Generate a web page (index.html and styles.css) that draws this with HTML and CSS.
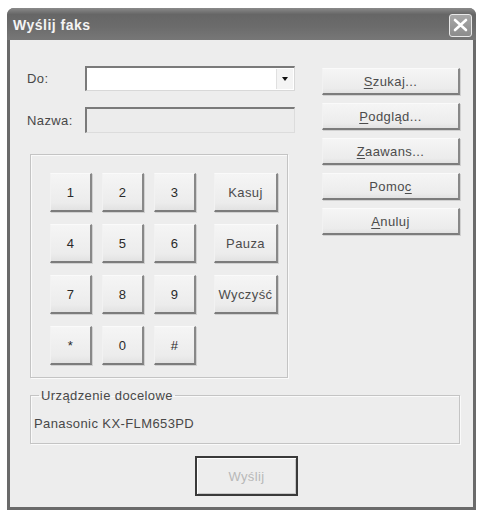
FILE: index.html
```html
<!DOCTYPE html>
<html lang="pl">
<head>
<meta charset="utf-8">
<title>Wyślij faks</title>
<link rel="stylesheet" href="styles.css">
</head>
<body>
<div class="window">
  <div class="titlebar">
    <span class="title">Wyślij faks</span>
    <div class="close"><svg width="15" height="14" viewBox="0 0 15 14"><path d="M2 2 L13 12 M13 2 L2 12" stroke="#fff" stroke-width="2.6" stroke-linecap="round"/></svg></div>
  </div>
  <div class="client">
    <div class="top">
      <div class="left">
        <div class="row">
          <label class="lbl">Do:</label>
          <div class="combo"><div class="combo-btn"><span class="arrow"></span></div></div>
        </div>
        <div class="row row2">
          <label class="lbl">Nazwa:</label>
          <div class="field"></div>
        </div>
        <div class="keypad">
          <button class="btn key">1</button>
          <button class="btn key">2</button>
          <button class="btn key">3</button>
          <button class="btn key wide">Kasuj</button>
          <button class="btn key">4</button>
          <button class="btn key">5</button>
          <button class="btn key">6</button>
          <button class="btn key wide">Pauza</button>
          <button class="btn key">7</button>
          <button class="btn key">8</button>
          <button class="btn key">9</button>
          <button class="btn key wide">Wyczyść</button>
          <button class="btn key">*</button>
          <button class="btn key">0</button>
          <button class="btn key">#</button>
        </div>
      </div>
      <div class="right">
        <button class="btn side"><u>S</u>zukaj...</button>
        <button class="btn side"><u>P</u>odgląd...</button>
        <button class="btn side"><u>Z</u>aawans...</button>
        <button class="btn side">Pomo<u>c</u></button>
        <button class="btn side"><u>A</u>nuluj</button>
      </div>
    </div>
    <fieldset class="device">
      <legend>Urządzenie docelowe</legend>
      <div class="device-name">Panasonic KX-FLM653PD</div>
    </fieldset>
    <div class="footer">
      <button class="btn send" disabled>Wyślij</button>
    </div>
  </div>
</div>
</body>
</html>
```
FILE: styles.css
```css
html, body {
  margin: 0;
  padding: 0;
  background: #ffffff;
}
body {
  font-family: "Liberation Sans", Arial, sans-serif;
  font-size: 13px;
  letter-spacing: 0.4px;
  color: #484848;
}
.window {
  margin: 8px 0 0 7px;
  width: 469px;
  height: 502px;
  background: #6a6a6a;
  border-radius: 7px 7px 0 0;
  display: flex;
  flex-direction: column;
  overflow: hidden;
}
.titlebar {
  height: 32px;
  flex: none;
  background: linear-gradient(#8a8a8a 0%, #666 20%, #6c6c6c 60%, #777 100%);
  display: flex;
  align-items: center;
  justify-content: space-between;
  padding: 0 4px 0 6px;
}
.title {
  font-family: "Liberation Sans", sans-serif;
  font-weight: bold;
  font-size: 14px;
  color: #f4f4f4;
  letter-spacing: 0.5px;
  margin-top: 2px;
}
.close {
  width: 21px;
  height: 21px;
  border: 1.5px solid #e8e8e8;
  border-radius: 3px;
  background: linear-gradient(#a8a8a8, #8c8c8c);
  display: flex;
  align-items: center;
  justify-content: center;
  margin-top: 2px;
}
.client {
  flex: 1;
  margin: 0 3px 3px 3px;
  background: #ededed;
  display: flex;
  flex-direction: column;
}
.top {
  display: flex;
  padding: 26px 0 0 17px;
}
.left {
  width: 268px;
  display: flex;
  flex-direction: column;
}
.row {
  display: flex;
  align-items: center;
  height: 25px;
}
.row2 {
  margin-top: 16px;
  height: 26px;
}
.lbl {
  width: 58px;
}
.combo {
  flex: 1;
  height: 25px;
  box-sizing: border-box;
  background: #fff;
  border-style: solid;
  border-width: 2px 1px 1px 2px;
  border-color: #7a7a7a #d8d8d8 #d8d8d8 #7a7a7a;
  display: flex;
  justify-content: flex-end;
  padding: 1px;
}
.combo-btn {
  width: 16px;
  display: flex;
  align-items: center;
  justify-content: center;
  background: #f4f4f4;
  border-left: 1px solid #e0e0e0;
}
.arrow {
  width: 0;
  height: 0;
  border-left: 3.5px solid transparent;
  border-right: 3.5px solid transparent;
  border-top: 4px solid #111;
}
.field {
  flex: 1;
  height: 26px;
  box-sizing: border-box;
  background: #ececec;
  border-style: solid;
  border-width: 2px 1px 1px 2px;
  border-color: #7a7a7a #dcdcdc #dcdcdc #7a7a7a;
}
.btn {
  font-family: "Liberation Sans", Arial, sans-serif;
  font-size: 13px;
  letter-spacing: 0.4px;
  color: #4c4c4c;
  background: linear-gradient(#f5f5f5, #ececec 80%, #e2e2e2);
  border-style: solid;
  border-width: 1px 2px 2px 1px;
  border-color: #fafafa #888 #7c7c7c #f2f2f2;
  box-shadow: 1px 1px 0 #d0d0d0;
  padding: 0;
  box-sizing: border-box;
  cursor: default;
}
.btn u {
  text-decoration-thickness: 1px;
  text-underline-offset: 2px;
}
.keypad {
  margin: 21px 0 0 3px;
  width: 258px;
  height: 224px;
  box-sizing: border-box;
  border: 1px solid #c4c4c4;
  box-shadow: inset 1px 1px 0 #fafafa, 1px 1px 0 #fafafa;
  padding: 18px 9px 0 19px;
  display: grid;
  grid-template-columns: 42px 42px 42px 72px;
  grid-auto-rows: 39px;
  column-gap: 10px;
  row-gap: 12px;
  align-content: start;
}
.key {
  width: 42px;
  height: 39px;
  color: #2a2a2a;
}
.key.wide {
  width: 64px;
  justify-self: end;
  color: #4c4c4c;
}
.right {
  margin: 2px 0 0 27px;
  display: flex;
  flex-direction: column;
  gap: 8px;
}
.side {
  width: 138px;
  height: 27px;
}
.device {
  margin: 10px 0 0 20px;
  width: 430px;
  height: 56px;
  box-sizing: border-box;
  border: 1px solid #c4c4c4;
  box-shadow: inset 1px 1px 0 #fafafa, 1px 1px 0 #fafafa;
  padding: 0 0 0 3px;
}
.device legend {
  padding: 0 2px;
  margin-left: 5px;
  line-height: 15px;
}
.device-name {
  margin-top: 13px;
}
.footer {
  padding: 12px 0 0 185px;
}
.send {
  width: 103px;
  height: 40px;
  border: 2px solid #3a3a3a;
  color: #b8b8b8;
  background: #ededed;
  box-shadow: inset 1px 1px 0 #fff, inset -1px -1px 0 #c8c8c8;
}
```
